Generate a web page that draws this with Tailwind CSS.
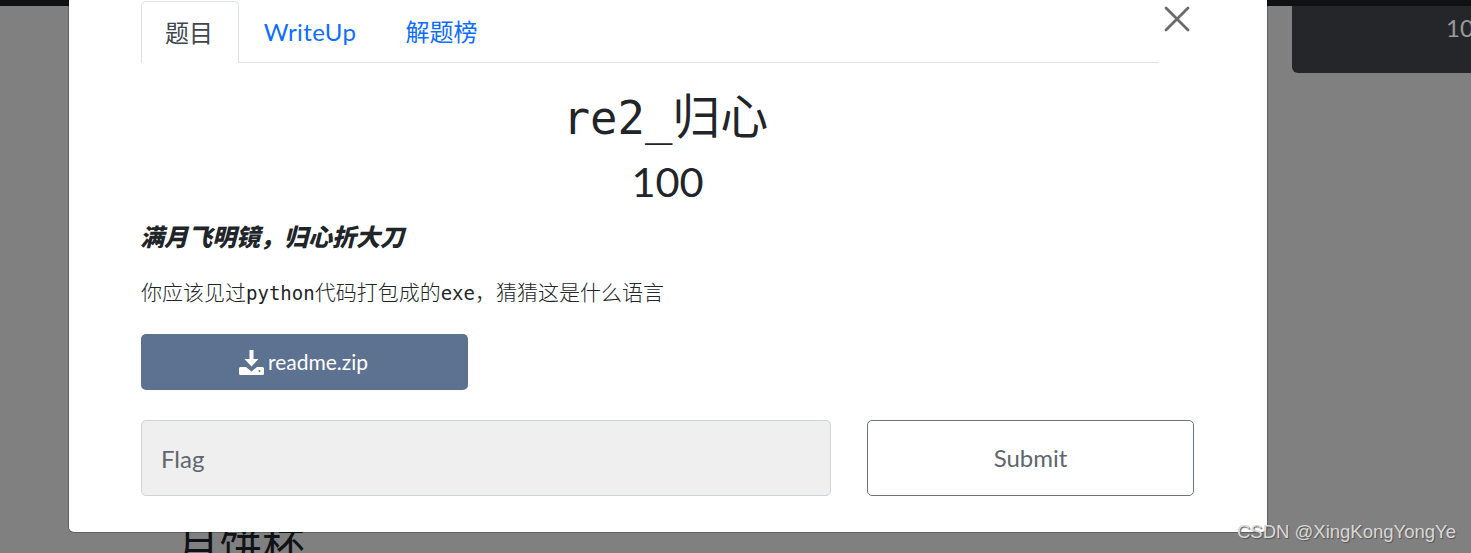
<!DOCTYPE html>
<html lang="en">
<head>
    <meta charset="UTF-8">
    <title>re2_归心</title>
    <script src="https://cdn.jsdelivr.net/npm/@tailwindcss/browser@4"></script>
</head>
<body class="relative h-[553px] overflow-hidden bg-[#808080] font-['Lato','Noto_Sans_CJK_SC',sans-serif] text-[#212529]">
    <!-- page behind the backdrop -->
    <div class="h-[6px] bg-[#101113]"></div>
    <div class="absolute right-0 top-[6px] h-[67px] w-[179px] overflow-hidden rounded-bl-[6px] bg-[#25262a] pl-[154px] pt-[4px] text-[24px] text-[#9a9a9a]">100</div>
    <h2 class="absolute left-[177px] top-[522px] whitespace-nowrap text-[42.500px] leading-[48px] text-[#101218]">月饼杯</h2>

    <!-- modal -->
    <div class="absolute left-[69px] top-0 h-[532px] w-[1198px] rounded-b-[5px] bg-white pl-[72px] pr-[73px] pt-px shadow-[0_0_0_1px_rgba(0,0,0,0.25)]">
        <button class="absolute right-[77px] top-[6px] text-[#6a6a6a]" type="button">
            <svg class="h-[26px] w-[26px]" viewBox="0 0 26 26" fill="none" stroke="currentColor" stroke-width="2.800" stroke-linecap="round"><path d="M2 2 L24 24 M24 2 L2 24"/></svg>
        </button>

        <ul class="mr-[35px] flex h-[62px] border-b border-[#dee2e6] text-[24px]">
            <li class="-mb-px flex h-[62px] w-[98px] items-center justify-center rounded-t-[5px] border border-b-0 border-[#dee2e6] bg-white pr-[2px] text-[#3f464d]">题目</li>
            <li class="flex w-[142px] items-center justify-center tracking-[0.4px] text-[#0d6efd]">WriteUp</li>
            <li class="flex w-[121px] items-center justify-center text-[#0d6efd]">解题榜</li>
        </ul>

        <h1 class="mt-[18px] pr-[4px] text-center text-[48px] leading-[64px]"><span class="font-['DejaVu_Sans_Mono',monospace] text-[45.500px]">re2_</span><span class="font-['Noto_Sans_CJK_SC',sans-serif] font-normal">归心</span></h1>
        <h2 class="mt-[6px] text-center text-[41.500px] leading-[48px]">100</h2>

        <p class="-ml-px mt-[13px] text-[24px] leading-[36px] font-black italic font-['Noto_Sans_CJK_SC',sans-serif]">满月飞明镜，归心折大刀</p>
        <p class="mt-[22px] text-[21px] leading-[30px] font-light font-['Noto_Sans_CJK_SC',sans-serif]">你应该见过<span class="font-['DejaVu_Sans_Mono',monospace] text-[19px] font-normal">python</span>代码打包成的<span class="font-['DejaVu_Sans_Mono',monospace] text-[19px] font-normal">exe</span>，猜猜这是什么语言</p>

        <button class="mt-[26px] flex h-[56px] w-[327px] items-center justify-center gap-[4px] rounded-[5px] bg-[#5c7290] pr-[2px] text-[21px] text-white" type="button">
            <svg class="h-[25px] w-[25px]" viewBox="0 0 25 25" fill="currentColor">
                <path d="M10.500 0h4v9h5l-7 7.500-7-7.500h5z"/>
                <path d="M0 18.500a1.500 1.500 0 0 1 1.500-1.500h5.500l5.500 4.500 5.500-4.500h5.500a1.500 1.500 0 0 1 1.500 1.500v5a1.500 1.500 0 0 1-1.500 1.500h-22a1.500 1.500 0 0 1-1.500-1.500z"/>
                <circle cx="20.500" cy="21" r="1" fill="#5c7290"/>
            </svg>
            readme.zip
        </button>

        <form class="mt-[30px] grid grid-cols-[690px_327px] gap-[36px]">
            <input class="h-[76px] rounded-[5px] border border-[#ced4da] bg-[#efefef] px-[19px] text-[24px] placeholder:text-[#5f666d]" type="text" placeholder="Flag">
            <button class="h-[76px] rounded-[5px] border border-[#6c757d] bg-white text-[24px] text-[#5f666d]" type="button">Submit</button>
        </form>
    </div>

    <!-- watermark -->
    <span class="absolute bottom-[9px] right-[15px] text-[18.500px] leading-[24px] text-[#d8d8d8] font-['Liberation_Sans',sans-serif] [text-shadow:1px_1px_1px_#555]">CSDN @XingKongYongYe</span>
</body>
</html>
